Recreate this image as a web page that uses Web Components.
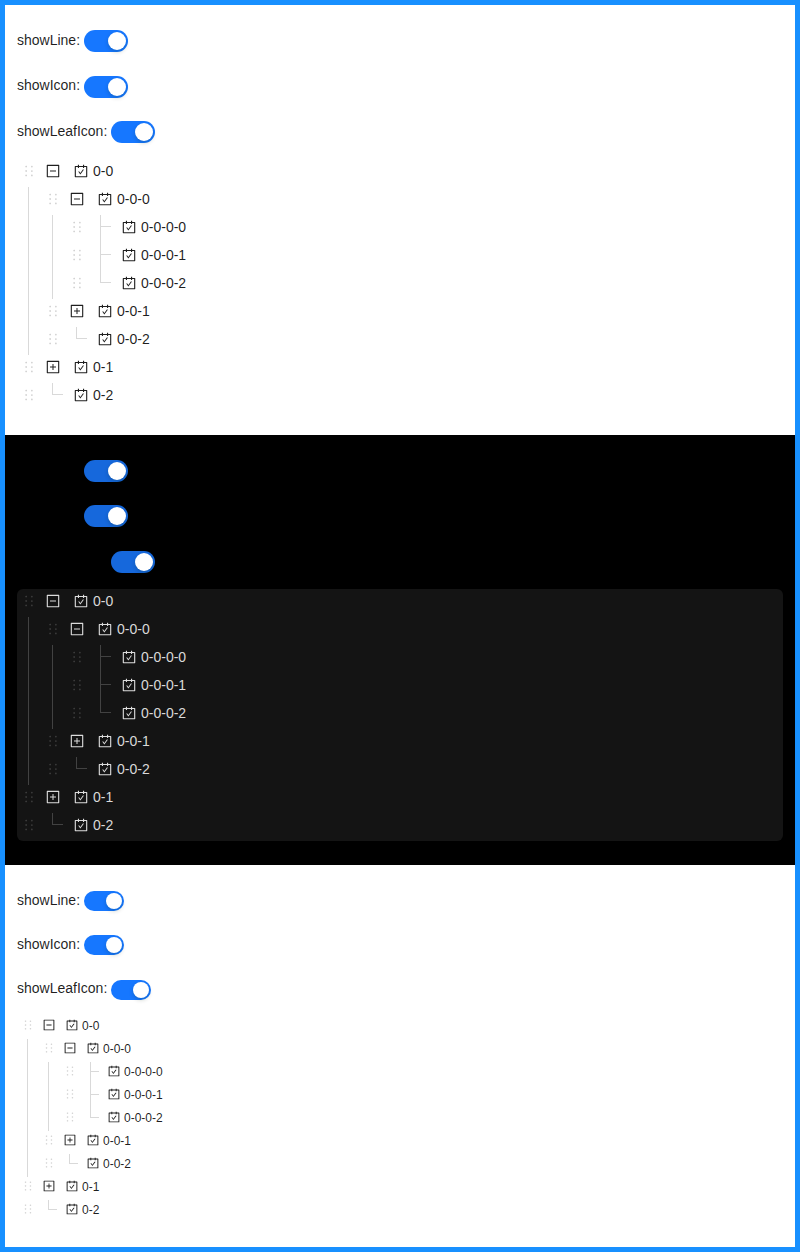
<!DOCTYPE html>
<html lang="en">
<head>
<meta charset="utf-8">
<title>Tree show line</title>
<style>
html,body{margin:0;background:#fff}
body{font:14px/22px "Liberation Sans",Arial,sans-serif;color:rgba(0,0,0,.88)}
</style>
</head>
<body>
<theme-board>
  <tree-demo></tree-demo>
  <tree-demo theme="dark"></tree-demo>
  <tree-demo theme="compact"></tree-demo>
</theme-board>
<script>
const ICONS = {
  holder: '<path d="M300 276.5a56 56 0 1056-97 56 56 0 00-56 97zm0 284a56 56 0 1056-97 56 56 0 00-56 97zM640 228a56 56 0 10112 0 56 56 0 00-112 0zm0 284a56 56 0 10112 0 56 56 0 00-112 0zM300 844.5a56 56 0 1056-97 56 56 0 00-56 97zM640 796a56 56 0 10112 0 56 56 0 00-112 0z"/>',
  minus: '<path d="M328 544h368c4.4 0 8-3.6 8-8v-48c0-4.4-3.6-8-8-8H328c-4.4 0-8 3.6-8 8v48c0 4.4 3.6 8 8 8z"/><path d="M880 112H144c-17.7 0-32 14.3-32 32v736c0 17.7 14.3 32 32 32h736c17.7 0 32-14.3 32-32V144c0-17.7-14.3-32-32-32zm-40 728H184V184h656v656z"/>',
  plus: '<path d="M328 544h152v152c0 4.4 3.6 8 8 8h48c4.4 0 8-3.6 8-8V544h152c4.4 0 8-3.6 8-8v-48c0-4.4-3.6-8-8-8H544V328c0-4.4-3.6-8-8-8h-48c-4.4 0-8 3.6-8 8v152H328c-4.4 0-8 3.6-8 8v48c0 4.4 3.6 8 8 8z"/><path d="M880 112H144c-17.7 0-32 14.3-32 32v736c0 17.7 14.3 32 32 32h736c17.7 0 32-14.3 32-32V144c0-17.7-14.3-32-32-32zm-40 728H184V184h656v656z"/>',
  carry: '<path d="M880 184H712v-64c0-4.4-3.6-8-8-8h-56c-4.4 0-8 3.6-8 8v64H384v-64c0-4.4-3.6-8-8-8h-56c-4.4 0-8 3.6-8 8v64H144c-17.7 0-32 14.3-32 32v664c0 17.7 14.3 32 32 32h736c17.7 0 32-14.3 32-32V216c0-17.7-14.3-32-32-32zm-40 656H184V256h128v48c0 4.4 3.6 8 8 8h56c4.4 0 8-3.6 8-8v-48h256v48c0 4.4 3.6 8 8 8h56c4.4 0 8-3.6 8-8v-48h128v584zM688 420h-55.2c-5.1 0-10 2.5-13 6.6L468.9 634.4l-64.7-89c-3-4.1-7.8-6.6-13-6.6H336c-6.5 0-10.3 7.4-6.5 12.7l126.4 174a16.1 16.1 0 0026 0l212.6-292.7c3.8-5.4 0-12.8-6.5-12.8z"/>'
};

class BaseElement extends HTMLElement {
  connectedCallback() {
    if (!this.shadowRoot) this.attachShadow({ mode: 'open' }).innerHTML = this.view();
  }
}

customElements.define('ui-icon', class extends BaseElement {
  view() {
    return `<style>:host{display:block;width:1em;height:1em}svg{display:block;width:1em;height:1em;fill:currentColor}</style>
      <svg viewBox="64 64 896 896">${ICONS[this.getAttribute('name')]}</svg>`;
  }
});

customElements.define('ui-switch', class extends BaseElement {
  view() {
    return `<style>
      :host{display:flex;box-sizing:border-box;justify-content:flex-end;width:var(--sw-w);height:var(--sw-h);padding:2px;border-radius:100px;background:var(--primary)}
      i{display:block;height:100%;aspect-ratio:1;border-radius:50%;background:#fff;box-shadow:0 2px 4px rgba(0,35,11,.2)}
      </style><i></i>`;
  }
});

customElements.define('switch-field', class extends BaseElement {
  view() {
    return `<style>
      :host{display:flex;align-items:flex-start;gap:3.9px;height:var(--pitch)}
      ui-switch{margin-top:var(--sw-y)}
      </style><span><slot></slot></span><ui-switch></ui-switch>`;
  }
});

customElements.define('tree-row', class extends BaseElement {
  view() {
    const level = +this.getAttribute('level');
    const state = this.getAttribute('state');
    const switcher = state === 'leaf' || state === 'last'
      ? `<span class="unit leaf ${state}"></span>`
      : `<span class="unit"><ui-icon name="${state}"></ui-icon></span>`;
    return `<style>
      :host{display:flex;height:var(--unit);padding-bottom:var(--gap);line-height:var(--unit)}
      .unit{flex:none;position:relative;box-sizing:border-box;width:var(--unit);height:var(--unit);display:flex;justify-content:center;padding-top:var(--icon-y)}
      .holder{opacity:.2}
      .line::before,.leaf::before{content:"";position:absolute;top:0;right:calc(var(--unit) / 2);bottom:calc(var(--gap) * -1);border-right:1px solid var(--line)}
      .last::before{bottom:auto;height:var(--elbow)}
      .leaf::after{content:"";position:absolute;box-sizing:border-box;top:0;left:calc(var(--unit) / 2 - 1px);width:var(--arm);height:var(--elbow);border-bottom:1px solid var(--line)}
      .content{display:flex;padding-left:var(--pad)}
      </style>
      ${'<span class="unit line"></span>'.repeat(level)}
      <span class="unit holder"><ui-icon name="holder"></ui-icon></span>
      ${switcher}
      <span class="content"><span class="unit"><ui-icon name="carry"></ui-icon></span><span><slot></slot></span></span>`;
  }
});

customElements.define('line-tree', class extends BaseElement {
  view() {
    const rows = [
      [0, 'minus', '0-0'], [1, 'minus', '0-0-0'],
      [2, 'leaf', '0-0-0-0'], [2, 'leaf', '0-0-0-1'], [2, 'last', '0-0-0-2'],
      [1, 'plus', '0-0-1'], [1, 'last', '0-0-2'],
      [0, 'plus', '0-1'], [0, 'last', '0-2']
    ];
    return `<style>:host{display:block;border-radius:6px;background:var(--tree-bg);color:var(--tree-text);font-size:var(--tree-font)}</style>
      ${rows.map(([l, s, t]) => `<tree-row level="${l}" state="${s}">${t}</tree-row>`).join('')}`;
  }
});

customElements.define('tree-demo', class extends BaseElement {
  view() {
    return `<style>
      :host{--primary:#1677ff;--sw-w:44px;--sw-h:22px;--sw-y:1.5px;--pitch:45.5px;--unit:24px;--gap:4px;--icon-y:5px;--elbow:12px;--arm:11px;--pad:4px;
        --line:#d9d9d9;--tree-bg:#fff;--tree-text:rgba(0,0,0,.88);--tree-font:14px;
        display:block;box-sizing:border-box;height:430px;padding:0 12px;background:#fff}
      :host([theme=dark]){--primary:#1668dc;--sw-y:1px;--line:#424242;--tree-bg:#141414;--tree-text:rgba(255,255,255,.85);background:#000}
      :host([theme=compact]){--sw-w:40px;--sw-h:20px;--sw-y:2.3px;--pitch:44.14px;--unit:21px;--gap:2px;--icon-y:3px;--elbow:10px;--arm:9.5px;--pad:2px;--tree-font:12px;height:382px}
      .fields{box-sizing:border-box;height:154px;padding-top:23.9px}
      :host([theme=compact]) .fields{height:151px;padding-top:24px}
      </style>
      <div class="fields"><switch-field>showLine:</switch-field><switch-field>showIcon:</switch-field><switch-field>showLeafIcon:</switch-field></div>
      <line-tree></line-tree>`;
  }
});

customElements.define('theme-board', class extends BaseElement {
  view() {
    return `<style>:host{display:block;box-sizing:border-box;height:1252px;border:5px solid #1890ff}</style><slot></slot>`;
  }
});
</script>
</body>
</html>
